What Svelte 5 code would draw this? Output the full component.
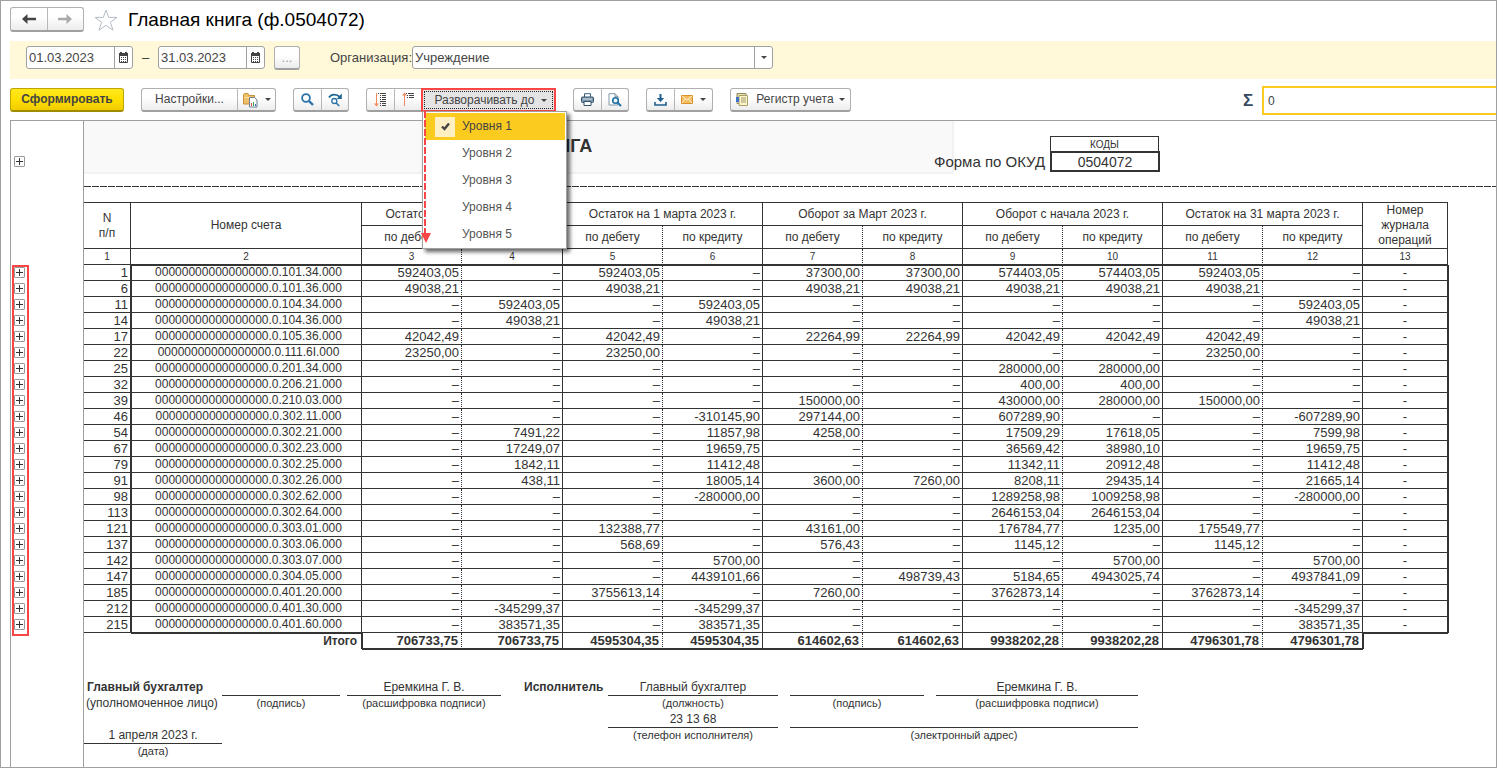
<script>
  let level = $state(1);
  let dateFrom = $state('01.03.2023');
  let dateTo = $state('31.03.2023');
  let sum = $state('0');

  const levels = [1, 2, 3, 4, 5];

  const groups = [
    'Остаток на 1 января 2023 г.',
    'Остаток на 1 марта 2023 г.',
    'Оборот за Март 2023 г.',
    'Оборот с начала 2023 г.',
    'Остаток на 31 марта 2023 г.'
  ];

  const source = `
1|0.101.34.000|592403,05|–|592403,05|–|37300,00|37300,00|574403,05|574403,05|592403,05|–
6|0.101.36.000|49038,21|–|49038,21|–|49038,21|49038,21|49038,21|49038,21|49038,21|–
11|0.104.34.000|–|592403,05|–|592403,05|–|–|–|–|–|592403,05
14|0.104.36.000|–|49038,21|–|49038,21|–|–|–|–|–|49038,21
17|0.105.36.000|42042,49|–|42042,49|–|22264,99|22264,99|42042,49|42042,49|42042,49|–
22|0.111.6I.000|23250,00|–|23250,00|–|–|–|–|–|23250,00|–
25|0.201.34.000|–|–|–|–|–|–|280000,00|280000,00|–|–
32|0.206.21.000|–|–|–|–|–|–|400,00|400,00|–|–
39|0.210.03.000|–|–|–|–|150000,00|–|430000,00|280000,00|150000,00|–
46|0.302.11.000|–|–|–|-310145,90|297144,00|–|607289,90|–|–|-607289,90
54|0.302.21.000|–|7491,22|–|11857,98|4258,00|–|17509,29|17618,05|–|7599,98
67|0.302.23.000|–|17249,07|–|19659,75|–|–|36569,42|38980,10|–|19659,75
79|0.302.25.000|–|1842,11|–|11412,48|–|–|11342,11|20912,48|–|11412,48
91|0.302.26.000|–|438,11|–|18005,14|3600,00|7260,00|8208,11|29435,14|–|21665,14
98|0.302.62.000|–|–|–|-280000,00|–|–|1289258,98|1009258,98|–|-280000,00
113|0.302.64.000|–|–|–|–|–|–|2646153,04|2646153,04|–|–
121|0.303.01.000|–|–|132388,77|–|43161,00|–|176784,77|1235,00|175549,77|–
137|0.303.06.000|–|–|568,69|–|576,43|–|1145,12|–|1145,12|–
142|0.303.07.000|–|–|–|5700,00|–|–|–|5700,00|–|5700,00
147|0.304.05.000|–|–|–|4439101,66|–|498739,43|5184,65|4943025,74|–|4937841,09
185|0.401.20.000|–|–|3755613,14|–|7260,00|–|3762873,14|–|3762873,14|–
212|0.401.30.000|–|-345299,37|–|-345299,37|–|–|–|–|–|-345299,37
215|0.401.60.000|–|383571,35|–|383571,35|–|–|–|–|–|383571,35`;

  const rows = source.trim().split('\n').map((line) => {
    const [num, account, ...values] = line.split('|');
    return { num, account: '0'.repeat(17) + '.' + account, values };
  });

  const totals = [
    '706733,75', '706733,75', '4595304,35', '4595304,35', '614602,63',
    '614602,63', '9938202,28', '9938202,28', '4796301,78', '4796301,78'
  ];
</script>

{#snippet calendar()}
  <svg width="11" height="11" viewBox="0 0 11 11" aria-hidden="true">
    <path d="M1.500 1.500h8v9h-8z" fill="#fff" stroke="#444" />
    <path d="M1 1h9v3H1zM2 0h2v2H2zM7 0h2v2H7z" fill="#444" />
    <path d="M3 5.500h6M3 7.500h6M3 9.500h6" stroke="#444" stroke-dasharray="1 1" />
  </svg>
{/snippet}

{#snippet arrow()}
  <svg class="arrow" width="6" height="3" viewBox="0 0 6 3" aria-hidden="true"><path d="M0 0h6L3 3z" fill="#444" /></svg>
{/snippet}

<main class="page">
  <header class="head">
    <div class="group nav">
      <button type="button" aria-label="Назад">
        <svg width="14" height="10" viewBox="0 0 14 10"><path d="M0 5l5.500-5v3.700H14v2.600H5.500V10z" fill="#444" /></svg>
      </button>
      <button type="button" aria-label="Вперед">
        <svg width="14" height="10" viewBox="0 0 14 10"><path d="M14 5L8.500 0v3.700H0v2.600h8.500V10z" fill="#aaa" /></svg>
      </button>
    </div>
    <button type="button" class="star" aria-label="Избранное">
      <svg width="24" height="22" viewBox="0 0 24 22"><path d="M12 1l2.700 7.400H23l-6.600 4.900 2.600 7.900-7-4.900-7 4.900 2.600-7.900L1 8.400h8.300z" fill="#fff" stroke="#b4bcc4" /></svg>
    </button>
    <h1>Главная книга (ф.0504072)</h1>
  </header>

  <section class="filter">
    <div class="field date">
      <input type="text" aria-label="Начало периода" bind:value={dateFrom} />
      <button type="button" aria-label="Выбрать начало">{@render calendar()}</button>
    </div>
    <span class="dash">–</span>
    <div class="field date">
      <input type="text" aria-label="Конец периода" bind:value={dateTo} />
      <button type="button" aria-label="Выбрать конец">{@render calendar()}</button>
    </div>
    <button type="button" class="more">...</button>
    <label for="org">Организация:</label>
    <div class="field org">
      <select id="org"><option>Учреждение</option></select>
      <span class="drop">{@render arrow()}</span>
    </div>
  </section>

  <section class="toolbar">
    <button type="button" class="primary">Сформировать</button>
    <div class="group">
      <button type="button" class="wide">Настройки...</button>
      <button type="button" class="split" aria-label="Варианты настроек">
        <svg width="15" height="16" viewBox="0 0 15 16">
          <path d="M.5 2.500V12h11V3.500H6l-1-2H1.500z" fill="#f0c069" stroke="#c98f35" />
          <path d="M1 5.500h10" stroke="#fbe2ad" />
          <path d="M6.500 5.500h5l2.500 2.500v7H6.500z" fill="#fff" stroke="#6a7f92" />
          <path d="M8.500 14v-3" stroke="#d34a3b" /><path d="M10.500 14v-4" stroke="#3f9a4c" /><path d="M12.500 14v-2" stroke="#3b6db0" />
        </svg>
        {@render arrow()}
      </button>
    </div>
    <div class="group">
      <button type="button" class="icon" aria-label="Найти">
        <svg width="13" height="13" viewBox="0 0 13 13"><circle cx="5" cy="5" r="3.900" fill="none" stroke="#2a72a8" stroke-width="1.800" /><path d="M8 8l4 4" stroke="#2a72a8" stroke-width="2.400" /></svg>
      </button>
      <button type="button" class="icon" aria-label="Найти далее">
        <svg width="15" height="14" viewBox="0 0 15 14"><path d="M1 4.500C3 1 8.500.7 12 4" fill="none" stroke="#1f6794" stroke-width="1.800" /><path d="M13.800.6v5.400H8.600z" fill="#1f6794" /><circle cx="6.300" cy="8" r="2.500" fill="none" stroke="#2a72a8" stroke-width="1.300" /><path d="M8.200 10l3 3" stroke="#2a72a8" stroke-width="1.700" /></svg>
      </button>
    </div>
    <div class="group levels">
      <button type="button" class="icon" aria-label="Развернуть группы">
        <svg width="13" height="15" viewBox="0 0 13 15"><path d="M2.500 1v12" stroke="#f08a5c" /><path d="M0 11.500h5l-2.500 3z" fill="#f08a5c" /><path d="M4 1.500h1M6 1.500h6M6 3.500h1M8 3.500h4M6 5.500h1M8 5.500h4M6 7.500h1M8 7.500h4M6 9.500h6M6 11.500h1M8 11.500h4M6 13.500h1M8 13.500h4" stroke="#444" /></svg>
      </button>
      <button type="button" class="icon" aria-label="Свернуть группы">
        <svg width="13" height="15" viewBox="0 0 13 15"><path d="M2.500 2v12" stroke="#f08a5c" /><path d="M0 3.500h5l-2.500-3z" fill="#f08a5c" /><path d="M4 1.500h1M6 1.500h6M5 3.500h1M7 3.500h5M5 5.500h1M7 5.500h5" stroke="#444" /></svg>
      </button>
      <div class="expand">
        <button type="button" class="open" aria-haspopup="menu" aria-expanded="true"><span>Разворачивать до</span>{@render arrow()}</button>
        <div class="menu" role="menu">
          {#each levels as n}
            <button type="button" role="menuitemradio" aria-checked={level === n} class:chosen={level === n} onclick={() => (level = n)}>
              <span class="tick">
                {#if level === n}
                  <svg width="9" height="9" viewBox="0 0 9 9" aria-hidden="true"><path d="M1 4.500l2.500 2.500L8 1.500" fill="none" stroke="#444" stroke-width="2.400" /></svg>
                {/if}
              </span>
              Уровня {n}
            </button>
          {/each}
        </div>
        <svg class="pointer" width="10" height="132" viewBox="0 0 10 132" aria-hidden="true">
          <path d="M4 0v122" stroke="#f94545" stroke-width="2" stroke-dasharray="7 2" /><path d="M0 122h10l-5 10z" fill="#f94545" />
        </svg>
      </div>
    </div>
    <div class="group">
      <button type="button" class="icon" aria-label="Печать">
        <svg width="13" height="13" viewBox="0 0 13 13"><path d="M3.500 4V.7h6V4" fill="#fff" stroke="#3e5f7a" /><rect x=".5" y="4" width="12" height="5.500" rx="1" fill="#7f98ad" stroke="#34536d" /><path d="M2 6h9" stroke="#d5e0e8" /><path d="M3 8.500h7v4H3z" fill="#fff" stroke="#34536d" /></svg>
      </button>
      <button type="button" class="icon" aria-label="Просмотр">
        <svg width="14" height="14" viewBox="0 0 14 14"><path d="M1 .7h6l3 3V12H1z" fill="#fff" stroke="#8094a5" /><path d="M7 .7v3h3" fill="none" stroke="#8094a5" /><circle cx="7.500" cy="7.500" r="2.800" fill="#eaf4fa" stroke="#1f6fa4" stroke-width="1.600" /><path d="M9.600 9.600l3.400 3.400" stroke="#1f6fa4" stroke-width="2" /></svg>
      </button>
    </div>
    <div class="group">
      <button type="button" class="icon" aria-label="Сохранить">
        <svg width="13" height="12" viewBox="0 0 13 12"><path d="M6.500 0v5" stroke="#1f5f8c" stroke-width="2" /><path d="M2.800 4h7.400L6.500 8z" fill="#1f5f8c" /><path d="M1 8v3h11V8" fill="none" stroke="#1f5f8c" stroke-width="1.600" /></svg>
      </button>
      <button type="button" class="split" aria-label="Отправить">
        <svg width="12" height="9" viewBox="0 0 12 9"><path d="M.5.5h11v8H.5z" fill="#f6bd60" stroke="#d9912c" /><path d="M1 1l5 4 5-4M1 8l3.500-4M11 8L7.500 4" fill="none" stroke="#fff0cf" /></svg>
        {@render arrow()}
      </button>
    </div>
    <div class="group">
      <button type="button" class="register">
        <svg width="12" height="13" viewBox="0 0 12 13" aria-hidden="true"><path d="M1 .5h9v10H1z" fill="#e6dfae" stroke="#8f8a62" /><path d="M3 2.500h8.500v10H3z" fill="#fdf6c9" stroke="#aaa06a" /><path d="M5 5h5M5 7h5M5 9h5" stroke="#a09a70" /><path d="M0 4h3v5H0z" fill="#3f74c4" /></svg>
        <span>Регистр учета</span>{@render arrow()}
      </button>
    </div>
    <label class="sigma" for="sum">Σ</label>
    <input id="sum" type="text" bind:value={sum} />
  </section>

  <section class="doc">
    <div class="gutter">
      <button type="button" class="plus first" aria-label="Развернуть шапку"></button>
      <div class="marks">
        {#each rows as row}
          <button type="button" class="plus" aria-label={'Развернуть ' + row.num}></button>
        {/each}
      </div>
    </div>

    <div class="sheet">
      <div class="top">
        <div class="band"><h2>ГЛАВНАЯ КНИГА</h2></div>
        <div class="okud">Форма по ОКУД</div>
        <div class="codes"><div>КОДЫ</div><div class="code">0504072</div></div>
      </div>
      <div class="cut"></div>

      <table>
        <colgroup>
          <col class="c-num" /><col class="c-acc" /><col class="c-val" /><col class="c-val4" />
          {#each { length: 8 } as _}<col class="c-val" />{/each}
          <col class="c-last" />
        </colgroup>
        <thead>
          <tr class="tall">
            <th rowspan="2">N<br />п/п</th>
            <th rowspan="2">Номер счета</th>
            {#each groups as g}<th colspan="2">{g}</th>{/each}
            <th rowspan="2">Номер<br />журнала<br />операций</th>
          </tr>
          <tr class="tall">
            {#each groups as _}<th class="dotted">по дебету</th><th>по кредиту</th>{/each}
          </tr>
          <tr class="index">
            {#each { length: 13 } as _, i}<th class:dotted={i > 1 && i < 12 && i % 2 === 0}>{i + 1}</th>{/each}
          </tr>
        </thead>
        <tbody>
          {#each rows as row}
            <tr>
              <td>{row.num}</td>
              <td class="acc">{row.account}</td>
              {#each row.values as v, i}<td class:dotted={i % 2 === 0}>{v}</td>{/each}
              <td class="journal">-</td>
            </tr>
          {/each}
        </tbody>
        <tfoot>
          <tr>
            <td></td>
            <td class="label">Итого</td>
            {#each totals as v, i}<td class="total" class:dotted={i % 2 === 0}>{v}</td>{/each}
            <td class="end"></td>
          </tr>
        </tfoot>
      </table>

      <div class="signs">
        <b class="chief">Главный бухгалтер</b>
        <span class="line s1"></span>
        <span class="line s2">Еремкина Г. В.</span>
        <b class="exec">Исполнитель</b>
        <span class="line s3">Главный бухгалтер</span>
        <span class="line s4"></span>
        <span class="line s5">Еремкина Г. В.</span>

        <span class="person">(уполномоченное лицо)</span>
        <small class="s1">(подпись)</small>
        <small class="s2">(расшифровка подписи)</small>
        <small class="s3">(должность)</small>
        <small class="s4">(подпись)</small>
        <small class="s5">(расшифровка подписи)</small>

        <span class="line s3 r3">23 13 68</span>
        <span class="line wide-line r3"></span>
        <span class="line day">1 апреля 2023 г.</span>
        <small class="s3 r4">(телефон исполнителя)</small>
        <small class="wide-line r4">(электронный адрес)</small>
        <small class="day-note">(дата)</small>
      </div>
    </div>
  </section>
</main>

<style>
  :global(body) { background: #fff; }
  * { box-sizing: border-box; }

  .page {
    display: flex;
    flex-direction: column;
    min-height: 100vh;
    padding-left: 9px;
    border: 1px solid #a0a0a0;
    overflow: hidden;
    color: #333;
    font: 13px/15px "Liberation Sans", Arial, sans-serif;
  }
  button, input, select { margin: 0; font: inherit; color: #444; }
  button { padding: 0; border: 0; background: none; }
  svg { display: block; flex: none; }

  .head { display: flex; align-items: center; height: 40px; padding-bottom: 3px; }
  h1 { margin: 0 0 0 10px; font-size: 19px; font-weight: 400; line-height: 24px; color: #000; }
  .star { margin-left: 10px; }

  .group {
    display: flex;
    height: 24px;
    border: 1px solid #b0b0b0;
    border-bottom: 2px solid #a0a0a0;
    border-radius: 3px;
    background: linear-gradient(#fff 40%, #ececec);
  }
  .group > button { display: flex; align-items: center; justify-content: center; }
  .group > * + * { border-left: 1px solid #b8b8b8; }
  .nav { height: 25px; width: 74px; }
  .nav button { flex: 1; }

  .filter { display: flex; align-items: center; height: 38px; padding: 0 0 5px 16px; background: #fff9d9; }
  .field { display: flex; height: 23px; border: 1px solid #a0a0a0; border-radius: 3px; background: #fff; overflow: hidden; }
  .field input { flex: 1; min-width: 0; padding: 0 0 0 2px; border: 0; background: none; outline: 0; }
  .field button, .drop { display: flex; flex: none; align-items: center; justify-content: center; width: 18px; border-left: 1px solid #a0a0a0; }
  .date { width: 107px; }
  .dash { width: 25px; text-align: center; }
  .more { width: 26px; height: 24px; margin-left: 9px; border: 1px solid #b0b0b0; border-bottom: 2px solid #a0a0a0; border-radius: 3px; background: linear-gradient(#fff 40%, #ececec); color: #999; }
  .filter label { width: 82px; margin-left: 30px; color: #444; }
  .org { width: 361px; }
  .org select { flex: 1; padding: 0 2px; border: 0; background: none; appearance: none; outline: 0; }

  .toolbar { display: flex; align-items: flex-start; gap: 17px; padding: 7px 0 5px; font-size: 12px; }
  .toolbar > .group, .primary { margin-top: 2px; flex: none; }
  .primary { width: 114px; height: 24px; border: 1px solid #bfa500; border-bottom: 2px solid #a08c00; border-radius: 3px; background: linear-gradient(#ffe81f, #ffdf00 50%, #f0cc00); font-weight: 700; }
  .wide { width: 95px; }
  .split { gap: 7px; width: 38px; }
  .icon { width: 27px; }
  .register { gap: 8px; width: 119px; }
  .register .arrow { margin-left: -3px; }
  .expand { position: relative; width: 134px; border: 0; }
  .open {
    display: flex; align-items: center; justify-content: center; gap: 6px;
    width: 135px; height: 24px; margin-top: -1px; padding-left: 4px;
    border: 2px solid #f94545; background: #e4e4e4; outline: 1px dotted #222; outline-offset: -4px;
  }
  .menu {
    position: absolute; z-index: 2; top: 22px; left: 1px; width: 145px; padding: 1px 1px 0 2px;
    border: 1px solid #a0a0a0; background: #fff; box-shadow: 3px 3px 4px rgb(0 0 0 / 60%);
  }
  .menu button { display: flex; align-items: center; gap: 7px; width: 100%; height: 27px; padding-left: 10px; color: #555; }
  .menu .chosen { background: #fbcb20; color: #444; }
  .tick { display: flex; align-items: center; justify-content: center; width: 20px; height: 20px; }
  .chosen .tick { background: #fff0c4; }
  .pointer { position: absolute; z-index: 3; top: 22px; left: 0; }

  .sigma { width: 11px; margin: 7px -9px 0 auto; font-size: 17px; font-weight: 700; color: #34495e; }
  #sum { flex: none; width: 236px; height: 29px; margin-right: -2px; padding: 0 4px; border: 2px solid #fbcb20; background: #fff; outline: 0; }

  .doc { display: flex; flex: 1; border-top: 1px solid #a0a0a0; border-left: 1px solid #a0a0a0; }
  .gutter { flex: none; width: 73px; padding: 35px 0 0 1px; border-right: 1px solid #a0a0a0; }
  .plus {
    display: block; width: 11px; height: 11px; border: 1px solid #999; border-radius: 1px;
    background: linear-gradient(#333, #333) center / 7px 1px no-repeat, linear-gradient(#333, #333) center / 1px 7px no-repeat, #fff;
  }
  .first { margin-left: 2px; }
  .marks { display: grid; gap: 5px; width: 17px; margin-top: 98px; padding: 0 0 4px; border: 2px solid #f94545; }

  .sheet { flex: 1; min-width: 0; font-size: 12px; }
  .top { display: flex; height: 53px; }
  .band { flex: none; width: 870px; border-right: 2px solid #f2f2f2; border-bottom: 2px solid #f2f2f2; background: #f9f9f9; }
  h2 { margin: 0; padding: 15px 0 0 357px; font-size: 18px; line-height: 20px; }
  .okud { flex: none; width: 112px; margin-left: -20px; padding-top: 32px; font-size: 15px; line-height: 17px; white-space: nowrap; }
  .codes { width: 110px; margin: 15px 0 0 4px; text-align: center; font-size: 10px; }
  .codes div { width: 109px; height: 15px; border: 1px solid #333; border-bottom: 0; }
  .codes .code { width: 110px; height: 21px; border: 2px solid #333; font-size: 14px; line-height: 18px; }
  .cut { height: 1px; margin: 12px 0 15px; background: repeating-linear-gradient(90deg, #333 0 7px, #fff 7px 8px); }

  table { width: 1364px; table-layout: fixed; border-collapse: separate; border-spacing: 0; border-top: 1px solid #333; }
  .c-num { width: 47px; }
  .c-acc { width: 231px; }
  .c-val { width: 100px; }
  .c-val4 { width: 101px; }
  .c-last { width: 85px; }
  th, td { height: 16px; padding: 0 2px; border: solid #333; border-width: 0 1px 1px 0; font-weight: 400; line-height: 15px; text-align: right; white-space: nowrap; overflow: hidden; }
  td { font-size: 13px; }
  th { padding: 0; text-align: center; }
  .tall th { height: 23px; }
  .index th { font-size: 10px; }
  .dotted { border-right-style: dotted; }
  td.acc, td.journal { text-align: center; }
  td.acc { padding-left: 7px; font-size: 12px; }
  .acc { box-shadow: inset 1px 0 #333; }
  tbody .journal { box-shadow: 1px 0 #333; }
  tbody tr:first-child td:not(:first-child) { box-shadow: inset 0 1px #333; }
  tbody tr:first-child td.acc { box-shadow: inset 1px 1px #333; }
  tbody tr:first-child td.journal { box-shadow: inset 0 1px #333, 1px 0 #333; }
  tfoot td { border-bottom: 0; font-weight: 700; }
  tfoot td:first-child { border: 0; }
  tfoot .label { padding-right: 4px; font-size: 12px; box-shadow: inset 0 1px #333; }
  tfoot .total { padding-right: 3px; border-bottom: 1px solid #333; box-shadow: 0 1px #333; }
  tfoot .label + .total { box-shadow: inset 1px 0 #333, 0 1px #333; }
  tfoot .end { border: 0; box-shadow: inset 1px 1px #333; }

  .signs {
    display: grid;
    grid-template-columns: 138px 118px 7px 154px 23px 84px 170px 12px 134px 12px 202px;
    grid-template-rows: repeat(5, 16px);
    margin-top: 31px;
    white-space: nowrap;
    text-align: center;
  }
  .line { border-bottom: 1px solid #333; }
  small { font-size: 11px; line-height: 14px; }
  .chief { grid-area: 1 / 1; text-align: left; padding-left: 3px; }
  .person { grid-area: 2 / 1; text-align: left; padding-left: 2px; }
  .exec { grid-area: 1 / 6; text-align: left; }
  .s1 { grid-column: 2; }
  .s2 { grid-column: 4; }
  .s3 { grid-column: 7; }
  .s4 { grid-column: 9; }
  .s5 { grid-column: 11; }
  .line:not(.r3, .day) { grid-row: 1; }
  small:not(.r4, .day-note) { grid-row: 2; }
  .r3 { grid-row: 3; }
  .r4 { grid-row: 4; }
  .wide-line { grid-column: 9 / 12; }
  .day { grid-area: 4 / 1; }
  .day-note { grid-area: 5 / 1; }
</style>
